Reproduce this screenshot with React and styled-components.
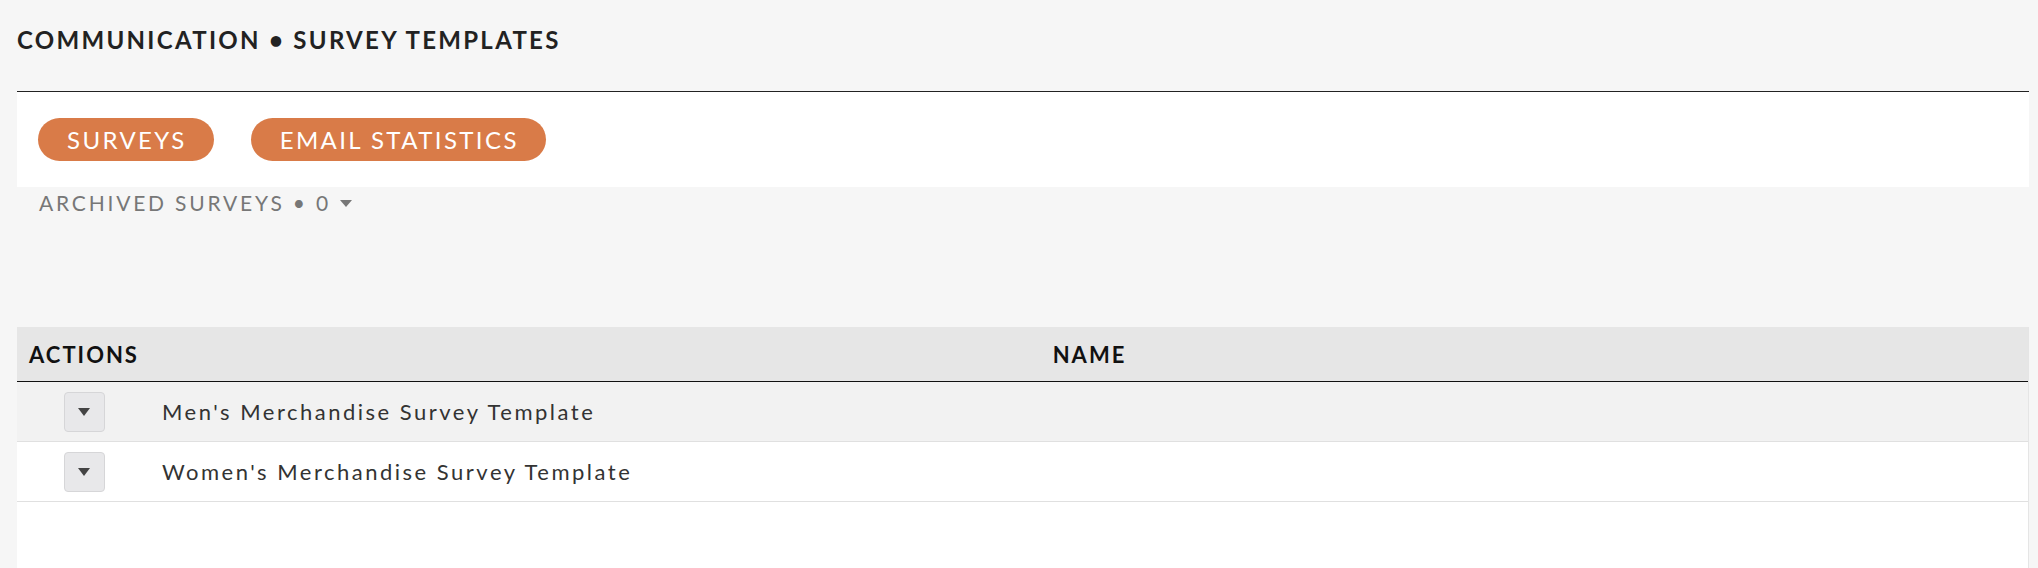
import React from 'react';
import styled, { createGlobalStyle } from 'styled-components';

const GlobalStyle = createGlobalStyle`
  body {
    margin: 0;
    background: #f6f6f6;
    font-family: Lato, "Noto Sans", sans-serif;
  }
`;

const Page = styled.div`
  display: flex;
  flex-direction: column;
  min-height: 568px;
  padding: 0 9px 0 17px;
  box-sizing: border-box;
`;

const Title = styled.h1`
  margin: 0;
  padding: 26px 0 37px;
  font-size: 24px;
  line-height: 28px;
  font-weight: 700;
  letter-spacing: 2.3px;
  color: #222;
  border-bottom: 1px solid #222;
`;

const TabPanel = styled.div`
  display: flex;
  gap: 37px;
  padding: 26px 21px 26px;
  background: #fff;
`;

const Pill = styled.button`
  height: 43px;
  padding: 0 27px 0 29px;
  border: none;
  border-radius: 22px;
  background: #d97b48;
  color: #fff;
  font-family: inherit;
  font-size: 24px;
  letter-spacing: 2.4px;
  cursor: pointer;
`;

const Archived = styled.div`
  display: flex;
  align-items: center;
  gap: 9px;
  margin-top: 4px;
  padding-left: 22px;
  font-size: 21px;
  line-height: 24px;
  letter-spacing: 2.8px;
  color: #777;
`;

const Caret = styled.span`
  width: 0;
  height: 0;
  border-left: ${({ w }) => w / 2}px solid transparent;
  border-right: ${({ w }) => w / 2}px solid transparent;
  border-top: ${({ h }) => h}px solid ${({ color }) => color};
`;

const TableWrap = styled.div`
  flex: 1;
  margin-top: 112px;
  background: #fff;
  border-right: 1px solid #e5e5e5;
`;

const Table = styled.table`
  width: 100%;
  border-collapse: collapse;
`;

const Th = styled.th`
  width: ${({ w }) => w || 'auto'};
  height: 54px;
  padding: 0 12px;
  background: #e6e6e6;
  border-bottom: 1px solid #111;
  font-size: 22px;
  font-weight: 700;
  letter-spacing: 2px;
  color: #111;
  text-align: center;
`;

const Row = styled.tr`
  background: ${({ shaded }) => (shaded ? '#f2f2f2' : '#fff')};
  border-bottom: 1px solid #e0e0e0;
`;

const Td = styled.td`
  height: 59px;
  padding: 0 11px;
  text-align: ${({ center }) => (center ? 'center' : 'left')};
  font-size: 22px;
  letter-spacing: 2.5px;
  color: #333;
`;

const DropButton = styled.button`
  display: inline-flex;
  align-items: center;
  justify-content: center;
  width: 41px;
  height: 40px;
  padding: 0;
  vertical-align: middle;
  background: #e8e8ea;
  border: 1px solid #d6d6d8;
  border-radius: 4px;
  cursor: pointer;
`;

const templates = [
  "Men's Merchandise Survey Template",
  "Women's Merchandise Survey Template",
];

const App = () => (
  <>
    <GlobalStyle />
    <Page>
      <Title>COMMUNICATION • SURVEY TEMPLATES</Title>
      <TabPanel>
        <Pill>SURVEYS</Pill>
        <Pill>EMAIL STATISTICS</Pill>
      </TabPanel>
      <Archived>
        <span>ARCHIVED SURVEYS • 0</span>
        <Caret w={13} h={7} color="#777" />
      </Archived>
      <TableWrap>
        <Table>
          <thead>
            <tr>
              <Th w="110px">ACTIONS</Th>
              <Th>NAME</Th>
            </tr>
          </thead>
          <tbody>
            {templates.map((name, i) => (
              <Row key={name} shaded={i % 2 === 0}>
                <Td center>
                  <DropButton>
                    <Caret w={13} h={8} color="#444" />
                  </DropButton>
                </Td>
                <Td>{name}</Td>
              </Row>
            ))}
          </tbody>
        </Table>
      </TableWrap>
    </Page>
  </>
);

export default App;
